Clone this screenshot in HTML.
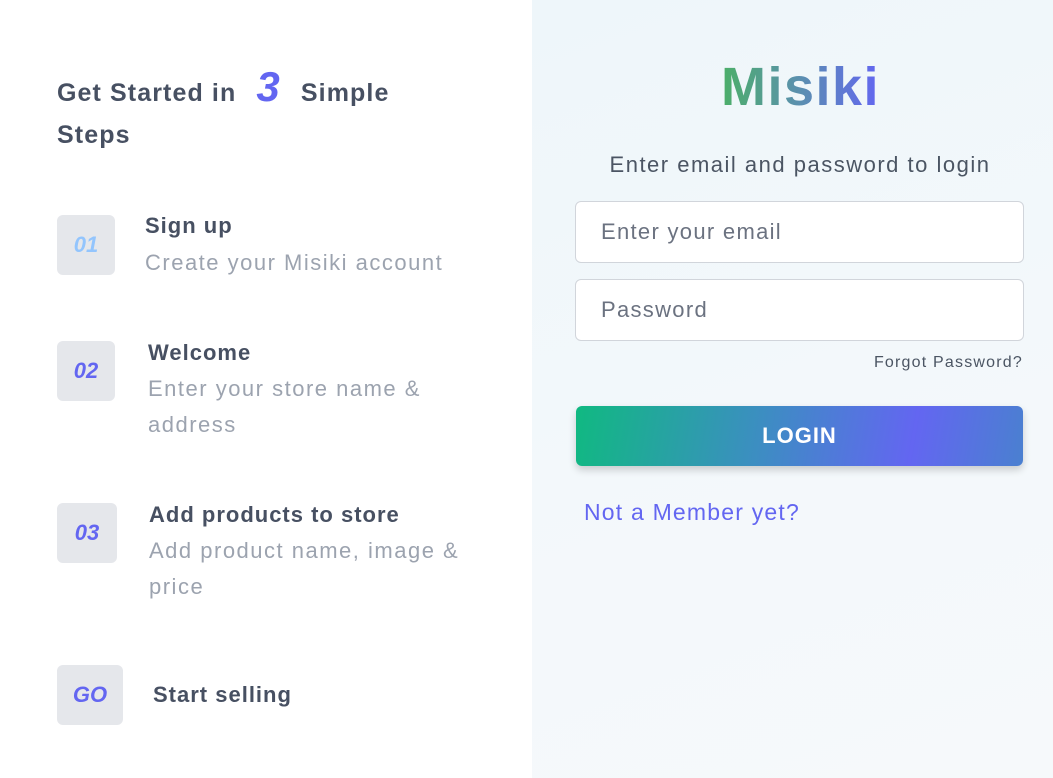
<!DOCTYPE html>
<html><head><style>
*{margin:0;padding:0;box-sizing:border-box}
body{width:1053px;height:778px;overflow:hidden;font-family:"Liberation Sans",sans-serif;background:#fff;position:relative}
.left{position:absolute;left:0;top:0;width:532px;height:778px;background:#fff}
.right{position:absolute;left:532px;top:0;width:521px;height:778px;background:linear-gradient(160deg,#eef6fa 0%,#f3f8fb 50%,#f6f9fb 100%)}
.h{position:absolute;left:57px;top:66px;font-size:25px;font-weight:bold;color:#475062;line-height:42px;width:360px;letter-spacing:1.1px}
.h .n{color:#6366f1;font-style:italic;font-size:42px;margin:0 12px 0 12px}
.box{position:absolute;width:58px;height:60px;background:#e5e7eb;border-radius:6px;font-weight:bold;font-style:italic;font-size:22px;color:#6366f1;display:flex;align-items:center;justify-content:center}
.t{position:absolute;font-size:22px;font-weight:bold;color:#475062;letter-spacing:1px}
.s{position:absolute;font-size:22px;color:#9ca3af;line-height:36px;letter-spacing:1.5px}
.logo{position:absolute;left:721px;top:56px;font-size:54px;font-weight:bold;letter-spacing:1.5px;background:linear-gradient(90deg,#4caf68,#5b8fb0,#6366f1);-webkit-background-clip:text;color:transparent}
.sub{position:absolute;left:575px;width:450px;text-align:center;top:152px;font-size:22px;color:#4b5563;letter-spacing:1.5px}
.in{position:absolute;left:575px;width:449px;height:62px;background:#fff;border:1.5px solid #d1d5db;border-radius:6px;font-size:22px;color:#6b7280;padding-left:25px;line-height:59px;letter-spacing:1.3px}
.fp{position:absolute;right:30px;top:354px;font-size:16px;color:#4b5563;letter-spacing:1.2px}
.btn{position:absolute;left:576px;top:406px;width:447px;height:60px;border-radius:6px;background:linear-gradient(100deg,#10b981 0%,#3b8fc0 40%,#6366f1 75%,#4a80d0 100%);color:#fff;font-weight:bold;font-size:22px;text-align:center;line-height:60px;box-shadow:0 4px 8px rgba(0,0,0,.18);letter-spacing:1px}
.nm{position:absolute;left:584px;top:499px;font-size:23px;color:#6366f1;letter-spacing:1.2px}
</style></head><body>
<div class="left"></div><div class="right"></div>
<div class="h">Get Started in <span class="n">3</span> Simple Steps</div>
<div class="box" style="left:57px;top:215px;color:#93c5fd">01</div>
<div class="t" style="left:145px;top:213px">Sign up</div>
<div class="s" style="left:145px;top:245px">Create your Misiki account</div>
<div class="box" style="left:57px;top:341px">02</div>
<div class="t" style="left:148px;top:340px">Welcome</div>
<div class="s" style="left:148px;top:371px;width:300px">Enter your store name &amp; address</div>
<div class="box" style="left:57px;top:503px;width:60px">03</div>
<div class="t" style="left:149px;top:502px">Add products to store</div>
<div class="s" style="left:149px;top:533px;width:330px">Add product name, image &amp; price</div>
<div class="box" style="left:57px;top:665px;width:66px">GO</div>
<div class="t" style="left:153px;top:682px">Start selling</div>
<div class="logo">Misiki</div>
<div class="sub">Enter email and password to login</div>
<div class="in" style="top:201px">Enter your email</div>
<div class="in" style="top:279px">Password</div>
<div class="fp">Forgot Password?</div>
<div class="btn">LOGIN</div>
<div class="nm">Not a Member yet?</div>
</body></html>
